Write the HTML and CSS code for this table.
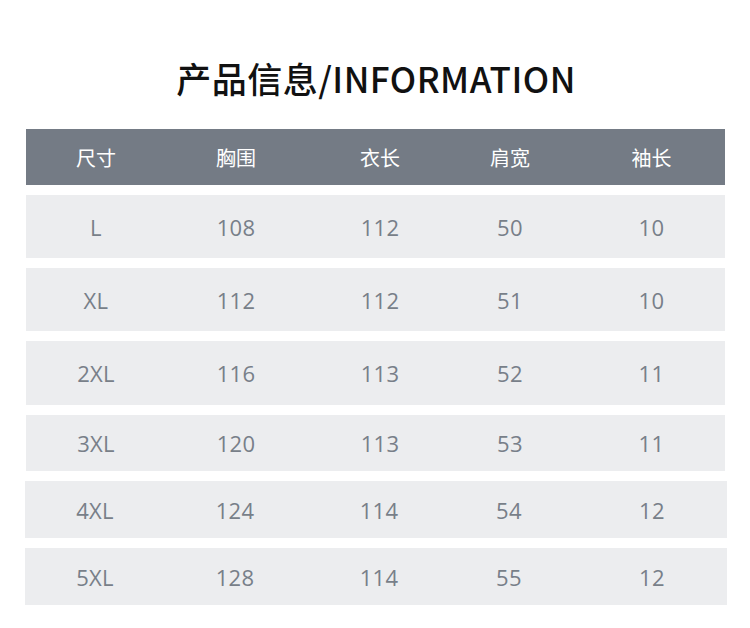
FILE: index.html
```html
<!DOCTYPE html>
<html lang="zh">
<head>
<meta charset="utf-8">
<link rel="stylesheet" href="styles.css">
</head>
<body>
<div class="page">
  <h1 class="title">产品信息/INFORMATION</h1>
  <div class="table">
    <div class="row head">
      <div class="cell">尺寸</div><div class="cell">胸围</div><div class="cell">衣长</div><div class="cell">肩宽</div><div class="cell last">袖长</div>
    </div>
    <div class="row tall">
      <div class="cell">L</div><div class="cell">108</div><div class="cell">112</div><div class="cell">50</div><div class="cell last">10</div>
    </div>
    <div class="row tall">
      <div class="cell">XL</div><div class="cell">112</div><div class="cell">112</div><div class="cell">51</div><div class="cell last">10</div>
    </div>
    <div class="row taller">
      <div class="cell">2XL</div><div class="cell">116</div><div class="cell">113</div><div class="cell">52</div><div class="cell last">11</div>
    </div>
    <div class="row short">
      <div class="cell">3XL</div><div class="cell">120</div><div class="cell">113</div><div class="cell">53</div><div class="cell last">11</div>
    </div>
    <div class="row mid wide">
      <div class="cell">4XL</div><div class="cell">124</div><div class="cell">114</div><div class="cell">54</div><div class="cell last">12</div>
    </div>
    <div class="row mid wide">
      <div class="cell">5XL</div><div class="cell">128</div><div class="cell">114</div><div class="cell">55</div><div class="cell last">12</div>
    </div>
  </div>
</div>
</body>
</html>
```
FILE: styles.css
```css
html, body {
  margin: 0;
  padding: 0;
  background: #ffffff;
}
.page {
  width: 750px;
  height: 628px;
  padding-top: 55px;
  box-sizing: border-box;
}
.title {
  margin: 0;
  height: 45px;
  line-height: 45px;
  text-align: center;
  font-family: "Noto Sans CJK SC", "Noto Sans", sans-serif;
  font-weight: 500;
  font-size: 35px;
  color: #111111;
  letter-spacing: 0.5px;
  padding-left: 2px;
}
.table {
  margin: 29px 0 0 26px;
  width: 699px;
  display: flex;
  flex-direction: column;
  gap: 10px;
}
.row {
  display: grid;
  grid-template-columns: 140px 140px 148px 112px 1fr;
  align-items: center;
  background: #ecedef;
  color: #787f89;
  font-family: "Open Sans", "Noto Sans CJK SC", sans-serif;
  font-size: 22px;
  letter-spacing: 0.3px;
}
.row.head {
  height: 56px;
  background: #747b85;
  color: #ffffff;
  font-family: "Noto Sans CJK SC", sans-serif;
  font-size: 20px;
  letter-spacing: 0;
}
.row.tall { height: 63px; }
.row.taller { height: 64px; }
.row.short { height: 56px; }
.row.mid { height: 57px; }
.row.wide {
  margin-left: -1px;
  width: 702px;
}
.cell {
  text-align: center;
}
.cell.last {
  padding-left: 12px;
}
```
